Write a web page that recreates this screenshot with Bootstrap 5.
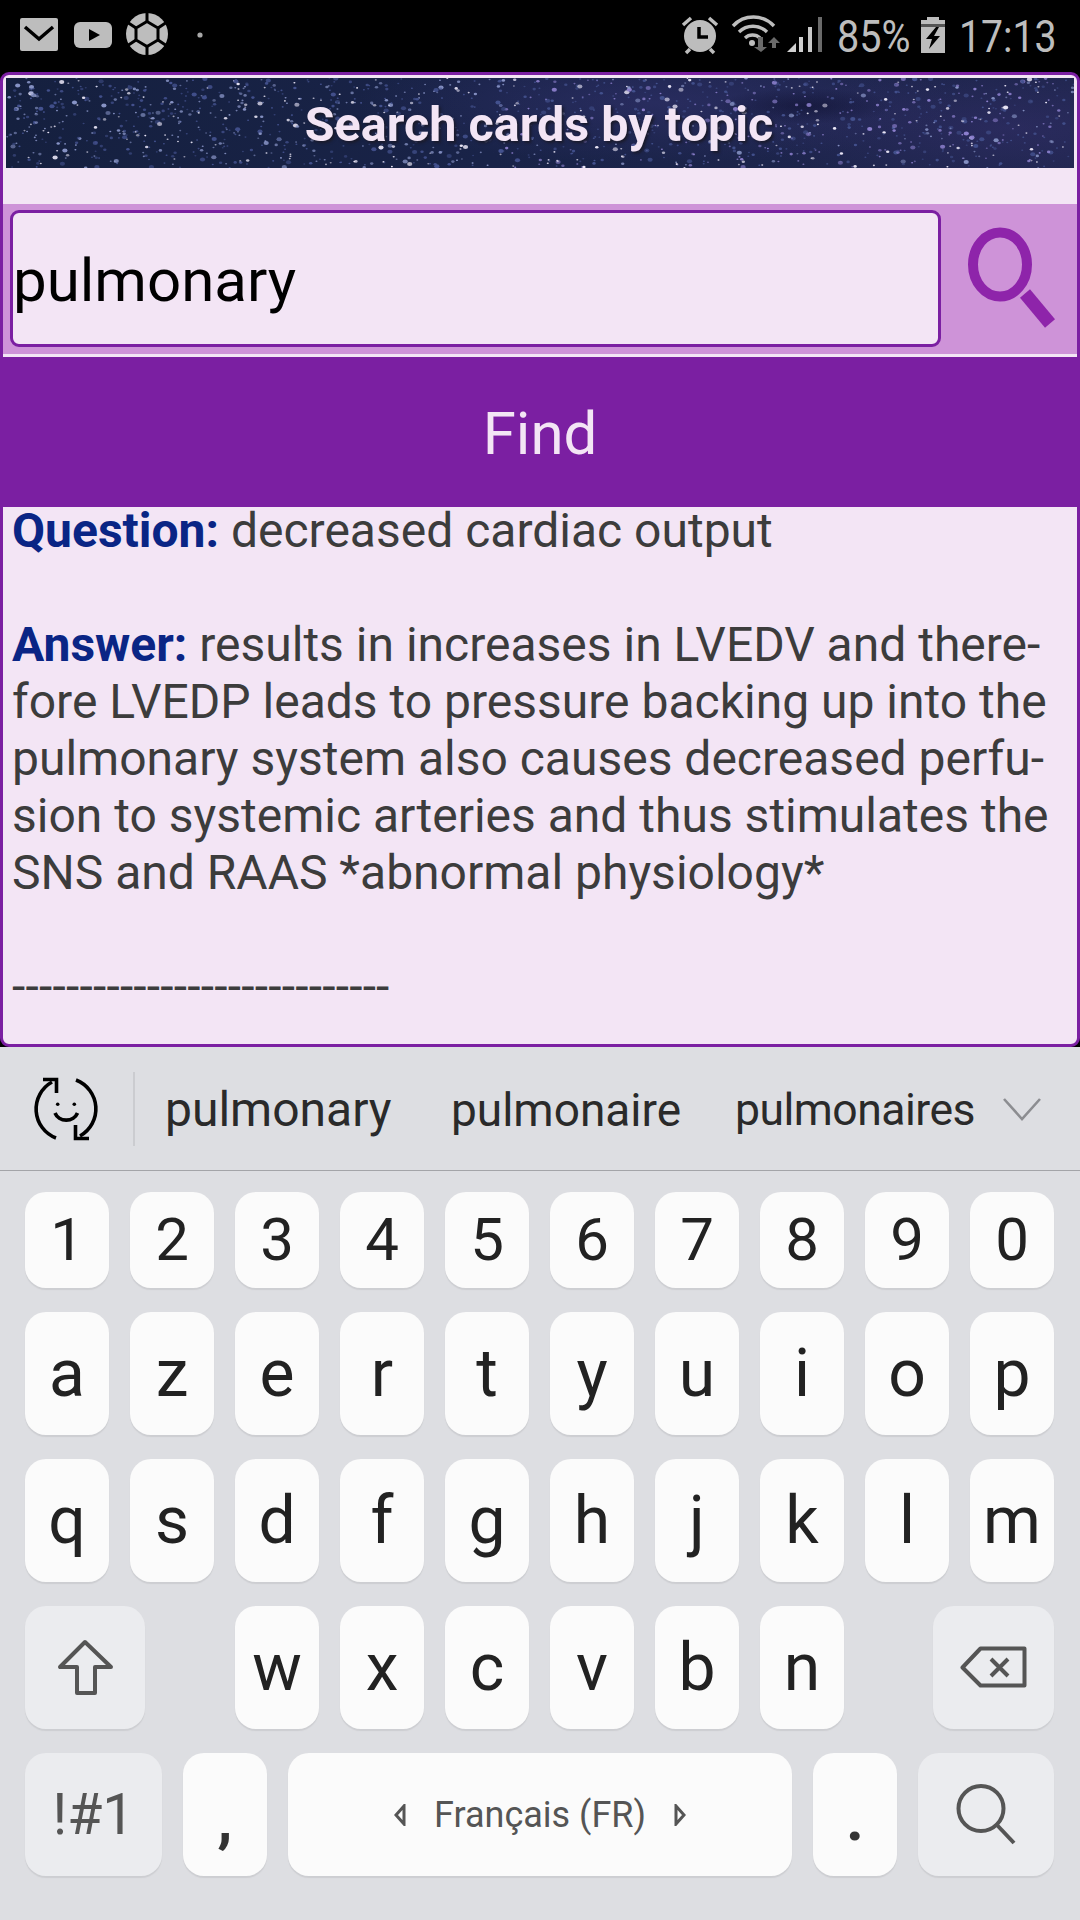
<!DOCTYPE html>
<html lang="en">
<head>
<meta charset="utf-8">
<title>Search cards by topic</title>
<link href="https://cdn.jsdelivr.net/npm/bootstrap@5.3.0/dist/css/bootstrap.min.css" rel="stylesheet">
<style>
html,body{margin:0;width:1080px;height:1920px;overflow:hidden;background:#000;font-family:Roboto,"Liberation Sans",sans-serif}
.phone-bar{height:72px;background:#000;color:#bdbdbd;font-size:45px;line-height:1}
.phone-bar svg{display:block}
.bar-pct{display:inline-block;width:71px;margin-left:8px;white-space:nowrap;transform:scaleX(.88);transform-origin:left center}
.bar-batt{margin-left:12px}
.bar-time{display:inline-block;width:95px;margin-left:13px;margin-right:26px;white-space:nowrap;transform:scaleX(.87);transform-origin:left center}
.app-panel{height:975px;border:3px solid #7b1fa2;border-radius:9px;background:#f3e5f5;overflow:hidden;--bs-card-bg:#f3e5f5}
.star-banner{position:relative;height:90px;margin:3px 3px 36px;overflow:hidden;background:
 radial-gradient(ellipse 90px 18px at 800px 28px,rgba(10,12,40,.5),transparent),
 radial-gradient(ellipse 300px 60px at 650px 25px,rgba(60,56,125,.4),transparent),
 radial-gradient(ellipse 260px 60px at 1000px 50px,rgba(58,50,115,.4),transparent),
 linear-gradient(90deg,#15203f,#192348 45%,#20264f)}
.star-field{position:absolute;inset:0}
.star-title{position:relative;font-weight:700;font-size:48.5px;line-height:93px;color:#f3e5f5;text-shadow:2px 2px 3px #1a1a2a;margin-left:-2px}
.search-row{height:150px;background:#ce93d8;padding:6px 0 7px 7px}
.search-field.form-control{width:931px;height:137px;flex:none;padding:4px 0 0;border:3px solid #7b1fa2;border-radius:9px;background:#f3e5f5;color:#000;font-size:60px;line-height:1;box-shadow:none}
.search-btn-ico{display:block;margin-left:18px}
.find-btn.btn{display:block;width:100%;height:150px;margin-top:3px;padding-top:10px;border:0;border-radius:0;background:#7b1fa2;color:#f3e5f5;font-size:60px;line-height:1}
.card-text-body{margin-top:-5px;padding:0 9px;font-size:48px;line-height:57px;color:#3c3c3c;white-space:nowrap;overflow:hidden;flex:1}
.q-label{font-weight:700;color:#0a2585}
.dash-line{letter-spacing:.22px}
.kbd-area{height:873px;background:#dddee2}
.suggest-row{height:124px;border-bottom:1px solid #a3a4a8;color:#2a2a2a}
.smile-ico{margin-left:26px}
.suggest-sep{width:2px;height:74px;margin-left:27px;background:#cbccd0}
.sug{padding-top:3px;font-size:48px;line-height:1;white-space:nowrap}
.sug-a{margin-left:30px;width:286px}
.sug-b{width:284px;font-size:46px}
.sug-c{width:268px;letter-spacing:-.5px;font-size:44.5px}
.key-rows{padding:21px 26px 0 25px;gap:24px}
.key-line{gap:21px;height:123px;font-size:66px}
.key-line-top{height:96px;font-size:60px}
.kk{flex:none;width:84px;height:100%;border-radius:21px;background:#fbfbfb;box-shadow:0 2px 1px #cdced2;color:#222;line-height:1}
.kk-fn{background:#ebecef;color:#555}
.kk-shift{width:120px}
.kk-del{width:121px;margin-left:auto}
.kk-w{margin-left:69px}
.kk-sym{width:137px;font-size:57px}
.kk-space{width:504px;color:#555;font-size:36px;gap:28px}
.kk-go{width:136px}
.kk-punct{align-items:flex-end!important;padding-bottom:26px;color:#333;font-size:62px;font-weight:700}
</style>
</head>
<body>
<div class="phone-bar d-flex align-items-center">
  <svg width="230" height="72" viewBox="0 0 230 72">
    <rect x="20" y="18" width="38" height="33" rx="2" fill="#bdbdbd"/>
    <path d="M25 27 L39 39 L53 27" fill="none" stroke="#000" stroke-width="3.5"/>
    <rect x="74" y="22" width="38" height="26" rx="6" fill="#bdbdbd"/>
    <path d="M89 29 L100 35 L89 41 Z" fill="#000"/>
    <circle cx="147" cy="34" r="21" fill="#bdbdbd"/>
    <path d="M147 21.5 L158 28 L158 40 L147 46.5 L136 40 L136 28 Z" fill="#bdbdbd" stroke="#000" stroke-width="3"/>
    <path d="M147 21V11M158 28L167 22M158 40L167 46M147 47V57M136 40L127 46M136 28L127 22" stroke="#000" stroke-width="3"/>
    <circle cx="200" cy="35" r="2.6" fill="#a8a8a8"/>
  </svg>
  <div class="ms-auto d-flex align-items-center">
    <svg width="150" height="72" viewBox="680 0 150 72">
      <circle cx="701" cy="36" r="16" fill="#bdbdbd"/>
      <path d="M684 25L692 18M718 25L710 18M691 49L687 53M711 49L715 53" stroke="#bdbdbd" stroke-width="3.5"/>
      <path d="M700 27V37H709" fill="none" stroke="#000" stroke-width="3.5"/>
      <g fill="none" stroke="#bdbdbd" stroke-width="3.4">
        <path d="M734 26 A28 28 0 0 1 775 26"/>
        <path d="M740 32 A20 20 0 0 1 768 32"/>
        <path d="M746 38 A11 11 0 0 1 761 38"/>
      </g>
      <circle cx="753" cy="43" r="3" fill="#bdbdbd"/>
      <path d="M761 38V48H757L764 53L770 48H766V38Z" fill="#6a6a6a" transform="translate(-2,-1)"/>
      <path d="M775 37L781 43H777V48H773V43H769Z" fill="#6a6a6a"/>
      <path d="M788 52L797 43V52Z" fill="#d0d0d0"/>
      <rect x="800" y="37" width="4" height="15" fill="#d0d0d0"/>
      <rect x="809" y="27" width="4" height="25" fill="#c8c8c8"/>
      <rect x="819" y="17" width="4" height="35" fill="#6a6a6a"/>
    </svg>
    <span class="bar-pct">85%</span>
    <svg class="bar-batt" width="26" height="72" viewBox="920 0 26 72">
      <path d="M927 17H939V20H945V53H921V20H927Z" fill="#bdbdbd"/>
      <rect x="921" y="24" width="24" height="3" fill="#555"/>
      <path d="M936 27L926 39H932L929 49L940 36H934L939 27Z" fill="#000"/>
    </svg>
    <span class="bar-time">17:13</span>
  </div>
</div>

<div class="card app-panel d-flex flex-column">
  <div class="star-banner text-center">
    <svg class="star-field" id="stars" width="1068" height="90" viewBox="0 0 1068 90"></svg>
    <div class="star-title">Search cards by topic</div>
  </div>
  <div class="search-row d-flex align-items-center">
    <input class="form-control search-field" type="text" value="pulmonary" aria-label="Topic">
    <svg class="search-btn-ico" width="100" height="110" viewBox="0 0 100 110">
      <ellipse cx="41" cy="40.5" rx="27" ry="32" fill="none" stroke="#8e24aa" stroke-width="10"/>
      <path d="M66 69.5 L91 99.5" stroke="#8e24aa" stroke-width="13"/>
    </svg>
  </div>
  <button class="btn find-btn" type="button">Find</button>
  <div class="card-text-body">
    <span class="q-label">Question:</span> decreased cardiac output<br><br>
    <span class="q-label">Answer:</span> results in increases in LVEDV and there-<br>fore LVEDP leads to pressure backing up into the<br>pulmonary system also causes decreased perfu-<br>sion to systemic arteries and thus stimulates the<br>SNS and RAAS *abnormal physiology*<br><br><span class="dash-line">----------------------------</span>
  </div>
</div>

<div class="kbd-area">
  <div class="suggest-row d-flex align-items-center">
    <svg class="smile-ico" width="80" height="80" viewBox="0 0 80 80" fill="none" stroke="#000" stroke-width="3.6">
      <path d="M30 69 A31 31 0 0 1 26 13"/>
      <path d="M17 10.5H30.5V24"/>
      <path d="M50 11 A31 31 0 0 1 54 67"/>
      <path d="M63 69.5H49.5V56"/>
      <circle cx="31.7" cy="35.3" r="1.8" fill="#000" stroke="none"/>
      <circle cx="48.3" cy="35.3" r="1.8" fill="#000" stroke="none"/>
      <path d="M29 44 A12 11 0 0 0 51.5 44"/>
    </svg>
    <div class="suggest-sep"></div>
    <div class="sug sug-a">pulmonary</div>
    <div class="sug sug-b">pulmonaire</div>
    <div class="sug sug-c">pulmonaires</div>
    <svg width="38" height="24" viewBox="0 0 38 24"><path d="M1 2L19 22L37 2" fill="none" stroke="#8c8d91" stroke-width="2.6"/></svg>
  </div>
  <div class="key-rows d-flex flex-column">
    <div class="d-flex key-line key-line-top">
      <div class="kk d-flex align-items-center justify-content-center">1</div>
      <div class="kk d-flex align-items-center justify-content-center">2</div>
      <div class="kk d-flex align-items-center justify-content-center">3</div>
      <div class="kk d-flex align-items-center justify-content-center">4</div>
      <div class="kk d-flex align-items-center justify-content-center">5</div>
      <div class="kk d-flex align-items-center justify-content-center">6</div>
      <div class="kk d-flex align-items-center justify-content-center">7</div>
      <div class="kk d-flex align-items-center justify-content-center">8</div>
      <div class="kk d-flex align-items-center justify-content-center">9</div>
      <div class="kk d-flex align-items-center justify-content-center">0</div>
    </div>
    <div class="d-flex key-line">
      <div class="kk d-flex align-items-center justify-content-center">a</div>
      <div class="kk d-flex align-items-center justify-content-center">z</div>
      <div class="kk d-flex align-items-center justify-content-center">e</div>
      <div class="kk d-flex align-items-center justify-content-center">r</div>
      <div class="kk d-flex align-items-center justify-content-center">t</div>
      <div class="kk d-flex align-items-center justify-content-center">y</div>
      <div class="kk d-flex align-items-center justify-content-center">u</div>
      <div class="kk d-flex align-items-center justify-content-center">i</div>
      <div class="kk d-flex align-items-center justify-content-center">o</div>
      <div class="kk d-flex align-items-center justify-content-center">p</div>
    </div>
    <div class="d-flex key-line">
      <div class="kk d-flex align-items-center justify-content-center">q</div>
      <div class="kk d-flex align-items-center justify-content-center">s</div>
      <div class="kk d-flex align-items-center justify-content-center">d</div>
      <div class="kk d-flex align-items-center justify-content-center">f</div>
      <div class="kk d-flex align-items-center justify-content-center">g</div>
      <div class="kk d-flex align-items-center justify-content-center">h</div>
      <div class="kk d-flex align-items-center justify-content-center">j</div>
      <div class="kk d-flex align-items-center justify-content-center">k</div>
      <div class="kk d-flex align-items-center justify-content-center">l</div>
      <div class="kk d-flex align-items-center justify-content-center">m</div>
    </div>
    <div class="d-flex key-line">
      <div class="kk kk-fn kk-shift d-flex align-items-center justify-content-center">
        <svg width="60" height="60" viewBox="0 0 60 60"><path d="M30 4L5 29H22V55H40V29H56Z" fill="none" stroke="#555" stroke-width="4" stroke-linejoin="round"/></svg>
      </div>
      <div class="kk kk-w d-flex align-items-center justify-content-center">w</div>
      <div class="kk d-flex align-items-center justify-content-center">x</div>
      <div class="kk d-flex align-items-center justify-content-center">c</div>
      <div class="kk d-flex align-items-center justify-content-center">v</div>
      <div class="kk d-flex align-items-center justify-content-center">b</div>
      <div class="kk d-flex align-items-center justify-content-center">n</div>
      <div class="kk kk-fn kk-del d-flex align-items-center justify-content-center">
        <svg width="70" height="50" viewBox="0 0 70 50"><path d="M3.5 24.5L21.5 5.5H65.5V42.5H21.5Z" fill="none" stroke="#555" stroke-width="4" stroke-linejoin="round"/><path d="M32 16L49 33M49 16L32 33" stroke="#555" stroke-width="4"/></svg>
      </div>
    </div>
    <div class="d-flex key-line">
      <div class="kk kk-fn kk-sym d-flex align-items-center justify-content-center">!#1</div>
      <div class="kk kk-punct d-flex justify-content-center">,</div>
      <div class="kk kk-space d-flex align-items-center justify-content-center">
        <svg width="12" height="22" viewBox="0 0 12 22"><path d="M10 2V20L2 11Z" fill="none" stroke="#555" stroke-width="3"/></svg>
        <span>Français (FR)</span>
        <svg width="12" height="22" viewBox="0 0 12 22"><path d="M2 2V20L10 11Z" fill="none" stroke="#555" stroke-width="3"/></svg>
      </div>
      <div class="kk kk-punct d-flex justify-content-center">.</div>
      <div class="kk kk-fn kk-go d-flex align-items-center justify-content-center">
        <svg width="70" height="70" viewBox="0 0 70 70"><circle cx="30" cy="28.5" r="22.5" fill="none" stroke="#555" stroke-width="4"/><path d="M46 45L63 63" stroke="#555" stroke-width="4"/></svg>
      </div>
    </div>
  </div>
</div>
<script src="https://cdn.jsdelivr.net/npm/bootstrap@5.3.0/dist/js/bootstrap.bundle.min.js"></script>
<script>
(function(){
  var svg=document.getElementById('stars'),s=7331,ns='http://www.w3.org/2000/svg';
  function r(){s=(s*16807)%2147483647;return s/2147483647;}
  for(var i=0;i<1500;i++){
    var c=document.createElementNS(ns,'ellipse'),big=r(),x=r()*1068;
    c.setAttribute('cx',x.toFixed(1));
    c.setAttribute('cy',(r()*90).toFixed(1));
    var rad=big>.9?2:big>.6?1.3:.8;
    c.setAttribute('rx',(rad*1.3).toFixed(2));
    c.setAttribute('ry',rad.toFixed(2));
    var v=r(),col=v>.84?'#ece8f8':(x>500&&v>.6)?'#8f82d0':v>.5?'#8a96c8':'#44528f';
    c.setAttribute('fill',col);
    c.setAttribute('opacity',(.5+r()*.5).toFixed(2));
    svg.appendChild(c);
  }
})();
</script>
</body>
</html>
